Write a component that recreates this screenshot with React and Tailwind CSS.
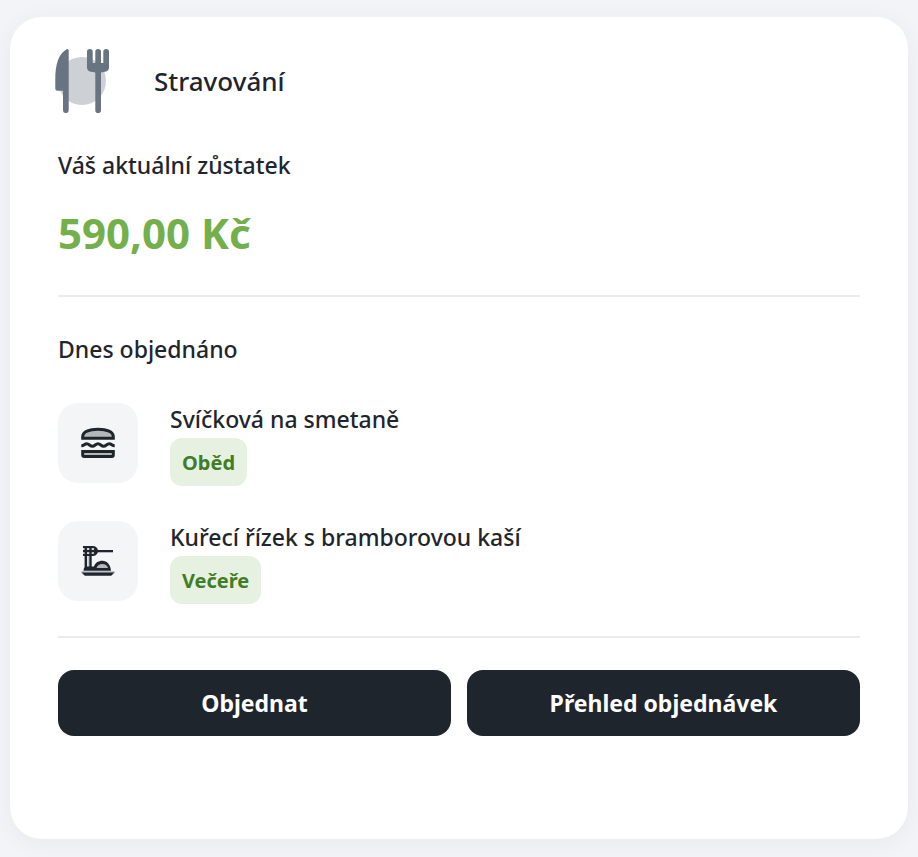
import React from "react";

const meals = [
  { name: "Svíčková na smetaně", type: "Oběd", icon: BurgerIcon },
  { name: "Kuřecí řízek s bramborovou kaší", type: "Večeře", icon: NoodlesIcon },
];

function CutleryIcon() {
  return (
    <svg width="64" height="64" viewBox="0 0 64 64" aria-hidden="true">
      <circle cx="32" cy="32" r="24" fill="#cdd0d5" />
      <g fill="#687482">
        <path d="M18.7 1.3v59.9a2.8 2.8 0 0 1-5.7 0V41.7H7.3a2 2 0 0 1-2-2V31C5.3 15 8.5 4.5 16.8.2a1.3 1.3 0 0 1 1.9 1.1z" />
        <path d="M37 2.7a2.85 2.7 0 0 1 5.7 0V14h2.6V2.7a2.85 2.7 0 0 1 5.7 0V14h2.3V2.7a2.85 2.7 0 0 1 5.7 0V18.5c0 2.3-1.2 3.8-4 4.3L51 23.5v37.7a2.85 2.8 0 0 1-5.7 0V23.5l-4.3-.7c-2.8-.5-4-2-4-4.3z" />
      </g>
    </svg>
  );
}

function BurgerIcon() {
  return (
    <svg width="40" height="40" viewBox="0 0 40 40" aria-hidden="true">
      <path
        d="M4.7 15.3v-1.6C4.7 9 11 6.200 20 6.200s15.300 2.800 15.300 7.500v1.600z"
        fill="#b4b8bb"
        stroke="#1f252d"
        strokeWidth="3"
      />
      <path
        d="M3.3 22.8c3 0 3-2 5.5-2s3 2.400 5.600 2.400 3-2.400 5.600-2.400 3 2.400 5.600 2.400 3-2.400 5.600-2.400 2.500 2 5.500 2"
        fill="none"
        stroke="#1f252d"
        strokeWidth="3"
      />
      <path
        d="M4.7 28.5h30.6v3.5c0 1-.5 1.500-1.500 1.500H6.200c-1 0-1.500-.5-1.500-1.500z"
        fill="#b4b8bb"
        stroke="#1f252d"
        strokeWidth="3"
      />
    </svg>
  );
}

function NoodlesIcon() {
  return (
    <svg width="40" height="40" viewBox="0 0 40 40" aria-hidden="true">
      {/* fork with noodles wound around it */}
      <path d="M5 11.500h30M5 8h12M5 12h12" stroke="#b4b8bb" />
      <path
        d="M5 6h9.500c2.500 0 4 1.800 4 4s-1.500 4-4 4H5M5 10h30"
        fill="none"
        stroke="#1f252d"
        strokeWidth="2.200"
      />
      <path d="M16 7.500h3.500v5H16z" fill="#1f252d" />
      <path d="M7.800 5v23M12.500 5v23" stroke="#1f252d" strokeWidth="2.400" />
      <path d="M10.200 15v12" stroke="#b4b8bb" />
      {/* plate */}
      <path
        d="M5.500 29.800c0-3 1.500-4.300 4-4.300h6.500C17 22 20 19.700 24.500 19.700s8 3.800 8.500 10.100z"
        fill="#1f252d"
      />
      <path d="M18.500 27c.8-2.500 3-4 5.800-4s5 1.500 5.700 4z" fill="#b4b8bb" />
      <path d="M3.300 31h33.400" stroke="#8d9296" />
      <path d="M3.500 31.500h33l-3.300 3.200H6.800z" fill="#1f252d" />
    </svg>
  );
}

const Meal = ({ name, type, icon: Icon }) => (
  <li className="flex gap-8">
    <div className="flex size-20 shrink-0 items-center justify-center rounded-[20px] bg-[#f4f5f7]">
      <Icon />
    </div>
    <div className="flex flex-col items-start gap-[3px]">
      <span className="text-[23px] leading-8 font-medium">{name}</span>
      <span className="h-12 rounded-xl bg-[#e6f1e1] px-3 text-xl leading-[50px] font-bold text-[#417d28]">
        {type}
      </span>
    </div>
  </li>
);

const App = () => {
  return (
    <main className="min-h-screen bg-[#f2f4f7] px-[10px] pt-[17px] pb-[18px] font-['Noto_Sans',sans-serif] text-[#1f252d]">
      <section className="rounded-[32px] bg-white px-12 pt-8 pb-[103px] shadow-[0_4px_24px_rgba(31,37,45,0.05)]">
        <header className="-ml-2 flex items-center gap-10">
          <CutleryIcon />
          <h1 className="text-[26px] font-medium">Stravování</h1>
        </header>

        <h2 className="mt-8 text-[23px] leading-10 font-medium">
          Váš aktuální zůstatek
        </h2>
        <p className="mt-4 text-[42px] leading-[64px] font-bold text-[#73b04b]">
          590,00 Kč
        </p>

        <hr className="mt-[30px] border-t-2 border-[#ebebeb]" />

        <h2 className="mt-8 text-[23px] leading-10 font-medium">
          Dnes objednáno
        </h2>
        <ul className="mt-[34px] flex flex-col gap-[35px]">
          {meals.map((meal) => (
            <Meal key={meal.name} {...meal} />
          ))}
        </ul>

        <hr className="mt-8 border-t-2 border-[#ebebeb]" />

        <div className="mt-8 grid grid-cols-2 gap-4 text-[23px] font-bold text-white">
          <button className="h-[66px] rounded-2xl bg-[#1f252d]">Objednat</button>
          <button className="h-[66px] rounded-2xl bg-[#1f252d]">
            Přehled objednávek
          </button>
        </div>
      </section>
    </main>
  );
};

export default App;
